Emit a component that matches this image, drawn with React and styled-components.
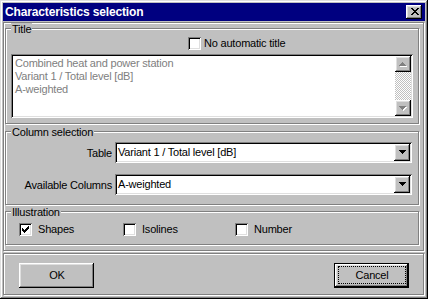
import React from "react";
import styled, { createGlobalStyle } from "styled-components";

const GlobalStyle = createGlobalStyle`
  html, body {
    margin: 0;
    padding: 0;
    background: #c0c0c0;
  }
  body {
    font-family: "Liberation Sans", Arial, sans-serif;
    font-size: 11px;
    letter-spacing: -0.2px;
    color: #000;
  }
`;

const raised = `
  box-shadow: inset -1px -1px #000, inset 1px 1px #fff,
    inset -2px -2px #808080, inset 2px 2px #dfdfdf;
`;

const sunken = `
  box-shadow: inset 1px 1px #808080, inset -1px -1px #fff,
    inset 2px 2px #000, inset -2px -2px #dfdfdf;
`;

const etched = `
  border: 1px solid #808080;
  box-shadow: inset 1px 1px #fff, 1px 1px #fff;
`;

const Window = styled.div`
  width: 428px;
  height: 299px;
  box-sizing: border-box;
  padding: 3px;
  background: #c0c0c0;
  box-shadow: inset -1px -1px #000, inset 1px 1px #dfdfdf,
    inset -2px -2px #808080, inset 2px 2px #fff;
  display: flex;
  flex-direction: column;
`;

const TitleBar = styled.div`
  height: 18px;
  flex: none;
  background: #000080;
  display: flex;
  align-items: center;
  justify-content: space-between;
  padding: 0 3px 0 2px;
`;

const Caption = styled.span`
  color: #fff;
  font-weight: 700;
  font-size: 12px;
  letter-spacing: -0.15px;
  line-height: 18px;
`;

const CloseButton = styled.div`
  width: 16px;
  height: 14px;
  box-sizing: border-box;
  background: #c0c0c0;
  ${raised}
  display: flex;
  align-items: center;
  justify-content: center;
  padding: 0 0 1px 1px;
`;

const Panel = styled.div`
  ${etched}
  flex: none;
  margin: 1px 1px 0 0;
  padding: 5px 4px 5px 1px;
  display: flex;
  flex-direction: column;
`;

const Group = styled.div`
  ${etched}
  margin-top: ${(p) => p.$top || 0}px;
  padding: 0 5px ${(p) => p.$bottom}px 5px;
  display: flex;
  flex-direction: column;
`;

const Legend = styled.div`
  align-self: flex-start;
  margin-top: -6px;
  padding: 0 1px;
  line-height: 13px;
  background: #c0c0c0;
`;

const CheckRow = styled.div`
  display: flex;
  align-items: center;
  margin-top: ${(p) => p.$top}px;
  margin-left: ${(p) => p.$left || 0}px;
  height: 13px;
`;

const CheckItem = styled.label`
  display: flex;
  align-items: center;
  width: ${(p) => (p.$width ? `${p.$width}px` : "auto")};
  gap: ${(p) => p.$gap}px;
  line-height: 13px;
`;

const Box = styled.span`
  width: 13px;
  height: 13px;
  box-sizing: border-box;
  background: #fff;
  ${sunken}
  display: flex;
  padding: 3px;
`;

const TextBox = styled.div`
  margin-top: 4px;
  height: 64px;
  box-sizing: border-box;
  background: #fff;
  ${sunken}
  padding: 2px;
  display: flex;
`;

const TextLines = styled.div`
  flex: 1;
  padding: 1px 2px;
  color: #808080;
  line-height: 13px;
`;

const ScrollBar = styled.div`
  width: 16px;
  display: flex;
  flex-direction: column;
`;

const ScrollButton = styled.div`
  width: 16px;
  height: 16px;
  box-sizing: border-box;
  background: #c0c0c0;
  ${raised}
  display: flex;
  align-items: center;
  justify-content: center;
`;

const ScrollTrack = styled.div`
  flex: 1;
  background: repeating-conic-gradient(#c0c0c0 0 25%, #fff 0 50%) 0 0 / 2px 2px;
`;

const FieldRow = styled.div`
  display: flex;
  align-items: center;
  margin-top: ${(p) => p.$top}px;
`;

const FieldLabel = styled.span`
  width: 101px;
  text-align: right;
  margin-right: 3px;
`;

const Combo = styled.div`
  width: 297px;
  height: 21px;
  box-sizing: border-box;
  background: #fff;
  ${sunken}
  padding: 2px;
  display: flex;
  align-items: center;
`;

const ComboText = styled.span`
  flex: 1;
  padding-left: 1px;
  line-height: 17px;
`;

const DropButton = styled.div`
  width: 16px;
  height: 17px;
  box-sizing: border-box;
  background: #c0c0c0;
  ${raised}
  display: flex;
  align-items: center;
  justify-content: center;
  padding-left: 1px;
`;

const ButtonBar = styled.div`
  ${etched}
  flex: none;
  height: 42px;
  box-sizing: border-box;
  margin: 2px 1px 0 0;
  padding: 9px 14px 0 15px;
  display: flex;
  justify-content: space-between;
  align-items: flex-start;
`;

const Button = styled.div`
  width: 75px;
  height: 25px;
  box-sizing: border-box;
  background: #c0c0c0;
  ${(p) =>
    p.$default
      ? `box-shadow: inset 0 0 0 1px #000, inset -2px -2px #000, inset 2px 2px #fff,
          inset -3px -3px #808080, inset 3px 3px #dfdfdf;`
      : raised}
  display: flex;
  padding: 3px 3px 4px 4px;
`;

const Focus = styled.span`
  flex: 1;
  display: flex;
  align-items: center;
  justify-content: center;
  border: 1px dotted ${(p) => (p.$show ? "#000" : "transparent")};
  line-height: 13px;
`;

function CloseGlyph() {
  const rows = [
    [0, 2, 6, 2],
    [1, 2, 5, 2],
    [2, 4],
    [3, 2],
    [2, 4],
    [1, 2, 5, 2],
    [0, 2, 6, 2],
  ];
  return (
    <svg width="8" height="7" shapeRendering="crispEdges">
      {rows.map((r, y) =>
        r.length === 4 ? (
          <g key={y}>
            <rect x={r[0]} y={y} width={r[1]} height="1" fill="#000" />
            <rect x={r[2]} y={y} width={r[3]} height="1" fill="#000" />
          </g>
        ) : (
          <rect key={y} x={r[0]} y={y} width={r[1]} height="1" fill="#000" />
        )
      )}
    </svg>
  );
}

function CheckGlyph() {
  const cells = [
    [6, 0, 1],
    [5, 1, 2],
    [0, 2, 1], [4, 2, 3],
    [0, 3, 2], [3, 3, 3],
    [0, 4, 5],
    [1, 5, 3],
    [2, 6, 1],
  ];
  return (
    <svg width="7" height="7" shapeRendering="crispEdges">
      {cells.map(([x, y, w], i) => (
        <rect key={i} x={x} y={y} width={w} height="1" fill="#000" />
      ))}
    </svg>
  );
}

function Arrow({ up, color, shadow }) {
  const rows = up
    ? [[3, 1], [2, 3], [1, 5], [0, 7]]
    : [[0, 7], [1, 5], [2, 3], [3, 1]];
  return (
    <svg width="8" height="5" shapeRendering="crispEdges">
      {shadow &&
        rows.map(([x, w], y) => (
          <rect key={`s${y}`} x={x + 1} y={y + 1} width={w} height="1" fill="#fff" />
        ))}
      {rows.map(([x, w], y) => (
        <rect key={y} x={x} y={y} width={w} height="1" fill={color} />
      ))}
    </svg>
  );
}

function CheckBox({ label, checked, gap, width }) {
  return (
    <CheckItem $gap={gap} $width={width}>
      <Box>{checked && <CheckGlyph />}</Box>
      <span>{label}</span>
    </CheckItem>
  );
}

function ComboBox({ value }) {
  return (
    <Combo>
      <ComboText>{value}</ComboText>
      <DropButton>
        <Arrow color="#000" />
      </DropButton>
    </Combo>
  );
}

export default function App() {
  return (
    <>
      <GlobalStyle />
      <Window>
        <TitleBar>
          <Caption>Characteristics selection</Caption>
          <CloseButton>
            <CloseGlyph />
          </CloseButton>
        </TitleBar>
        <Panel>
          <Group $bottom={5}>
            <Legend>Title</Legend>
            <CheckRow $top={1} $left={177}>
              <CheckBox label="No automatic title" gap={3} />
            </CheckRow>
            <TextBox>
              <TextLines>
                <div>Combined heat and power station</div>
                <div>Variant 1 / Total level [dB]</div>
                <div>A-weighted</div>
              </TextLines>
              <ScrollBar>
                <ScrollButton>
                  <Arrow up color="#808080" shadow />
                </ScrollButton>
                <ScrollTrack />
                <ScrollButton>
                  <Arrow color="#808080" shadow />
                </ScrollButton>
              </ScrollBar>
            </TextBox>
          </Group>
          <Group $top={7} $bottom={9}>
            <Legend>Column selection</Legend>
            <FieldRow $top={3}>
              <FieldLabel>Table</FieldLabel>
              <ComboBox value="Variant 1 / Total level [dB]" />
            </FieldRow>
            <FieldRow $top={11}>
              <FieldLabel>Available Columns</FieldLabel>
              <ComboBox value="A-weighted" />
            </FieldRow>
          </Group>
          <Group $top={6} $bottom={8}>
            <Legend>Illustration</Legend>
            <CheckRow $top={4} $left={8}>
              <CheckBox label="Shapes" checked gap={6} width={104} />
              <CheckBox label="Isolines" gap={6} width={112} />
              <CheckBox label="Number" gap={6} />
            </CheckRow>
          </Group>
        </Panel>
        <ButtonBar>
          <Button>
            <Focus>OK</Focus>
          </Button>
          <Button $default>
            <Focus $show>Cancel</Focus>
          </Button>
        </ButtonBar>
      </Window>
    </>
  );
}
